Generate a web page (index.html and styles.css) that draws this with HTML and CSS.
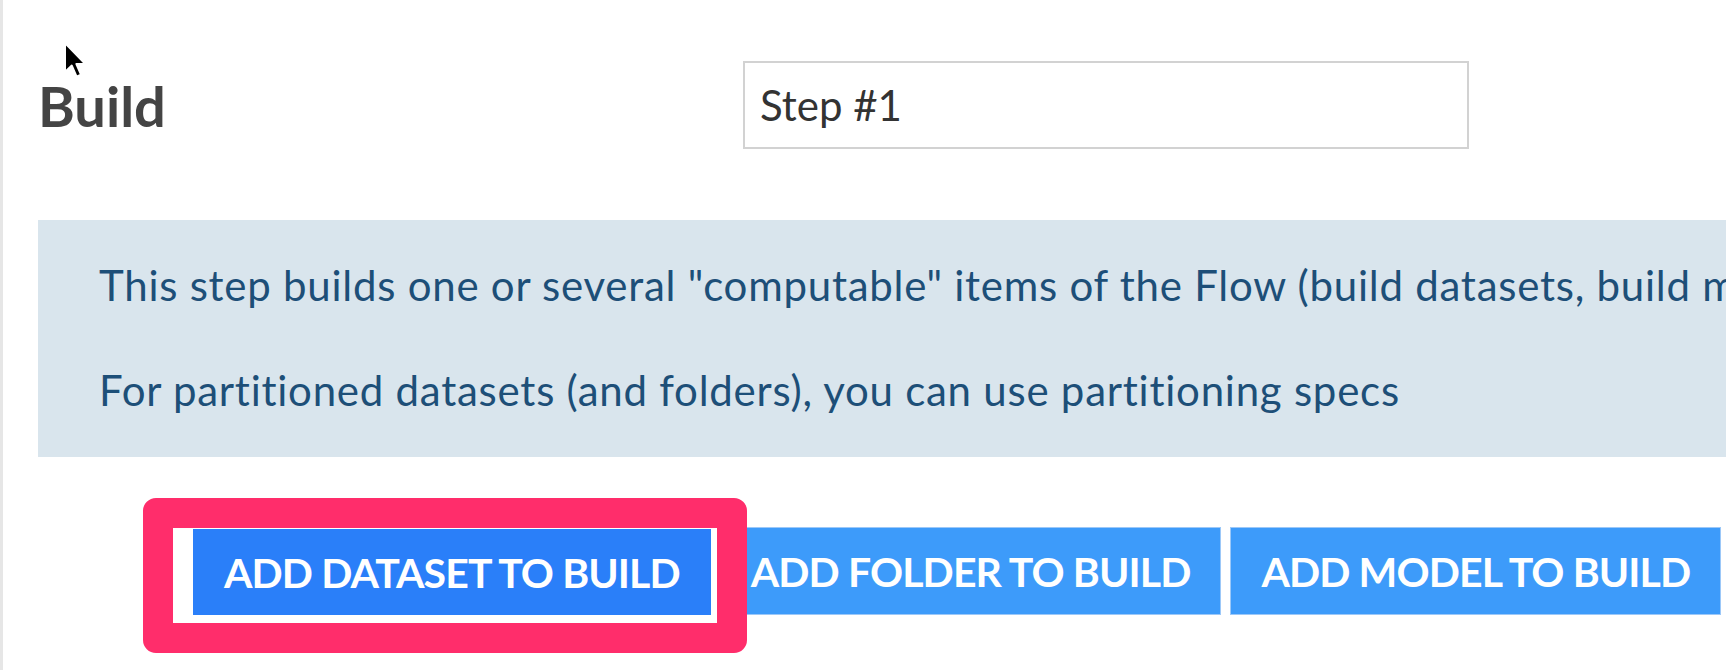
FILE: index.html
```html
<!DOCTYPE html>
<html lang="en">
<head>
<meta charset="utf-8">
<title>Build step</title>
<link rel="stylesheet" href="styles.css">
</head>
<body>
<div class="page">
  <svg class="cursor" width="26" height="38" viewBox="0 0 13 19" aria-hidden="true">
    <path d="M1 1 L1 15.5 L4.4 12.3 L6.8 17.8 L9 16.8 L6.7 11.5 L11.2 11.5 Z" fill="#000" stroke="#fff" stroke-width="1" stroke-linejoin="round"/>
  </svg>
  <header class="step-header">
    <h2 class="step-title">Build</h2>
    <input class="step-name" type="text" value="Step #1">
  </header>
  <div class="info">
    <p>This step builds one or several "computable" items of the Flow (build datasets, build models, ...)</p>
    <p>For partitioned datasets (and folders), you can use partitioning specs</p>
  </div>
  <div class="actions">
    <button class="btn btn-active">Add dataset to build</button>
    <button class="btn">Add folder to build</button>
    <button class="btn">Add model to build</button>
    <span class="highlight"></span>
  </div>
</div>
</body>
</html>
```

FILE: styles.css
```css
html, body {
  margin: 0;
  padding: 0;
  background: #fff;
  overflow: hidden;
}

body {
  font-family: Lato, "Liberation Sans", sans-serif;
  width: 1726px;
  height: 670px;
}

.page {
  position: relative;
  height: 670px;
  border-left: 3px solid #e6e6e6;
  padding-left: 35px;
  box-sizing: border-box;
}

.cursor {
  position: absolute;
  left: 60px;
  top: 41px;
}

.step-header {
  display: flex;
  align-items: center;
  padding-top: 61px;
}

.step-title {
  margin: 0;
  width: 705px;
  flex: none;
  font-size: 56px;
  font-weight: 700;
  color: #444;
  line-height: 1;
  padding-top: 2px;
}

.step-name {
  box-sizing: border-box;
  width: 726px;
  height: 88px;
  margin: 0;
  border: 2px solid #d2d2d2;
  border-radius: 0;
  padding: 0 0 0 15px;
  font-family: Lato, "Liberation Sans", sans-serif;
  font-size: 42px;
  color: #333;
  background: #fff;
  outline: none;
}

.info {
  margin-top: 71px;
  height: 237px;
  box-sizing: border-box;
  background: #d9e5ed;
  color: #1d4f78;
  padding: 35px 0 0 61px;
  white-space: nowrap;
  overflow: hidden;
  font-size: 42px;
  line-height: 60px;
  letter-spacing: 0.75px;
}

.info p {
  margin: 0;
}

.info p + p {
  margin-top: 45px;
}

.actions {
  position: relative;
  display: flex;
  gap: 9px;
  margin-top: 70px;
  padding-left: 155px;
}

.btn {
  flex: none;
  height: 88px;
  margin: 0;
  padding: 0 30px;
  border: 1px solid #9cc8f8;
  border-radius: 0;
  background: #3d9bfa;
  color: #fff;
  font-family: Lato, "Liberation Sans", sans-serif;
  font-size: 41px;
  font-weight: 700;
  text-transform: uppercase;
  letter-spacing: -0.9px;
  cursor: pointer;
}

.btn-active {
  background: #2a7ff9;
  border-color: #2a7ff9;
  margin-top: 2px;
  height: 86px;
}

.highlight {
  position: absolute;
  left: 105px;
  top: -29px;
  width: 604px;
  height: 155px;
  box-sizing: border-box;
  border: 30px solid #ff2d6b;
  border-radius: 13px;
  pointer-events: none;
}
```
